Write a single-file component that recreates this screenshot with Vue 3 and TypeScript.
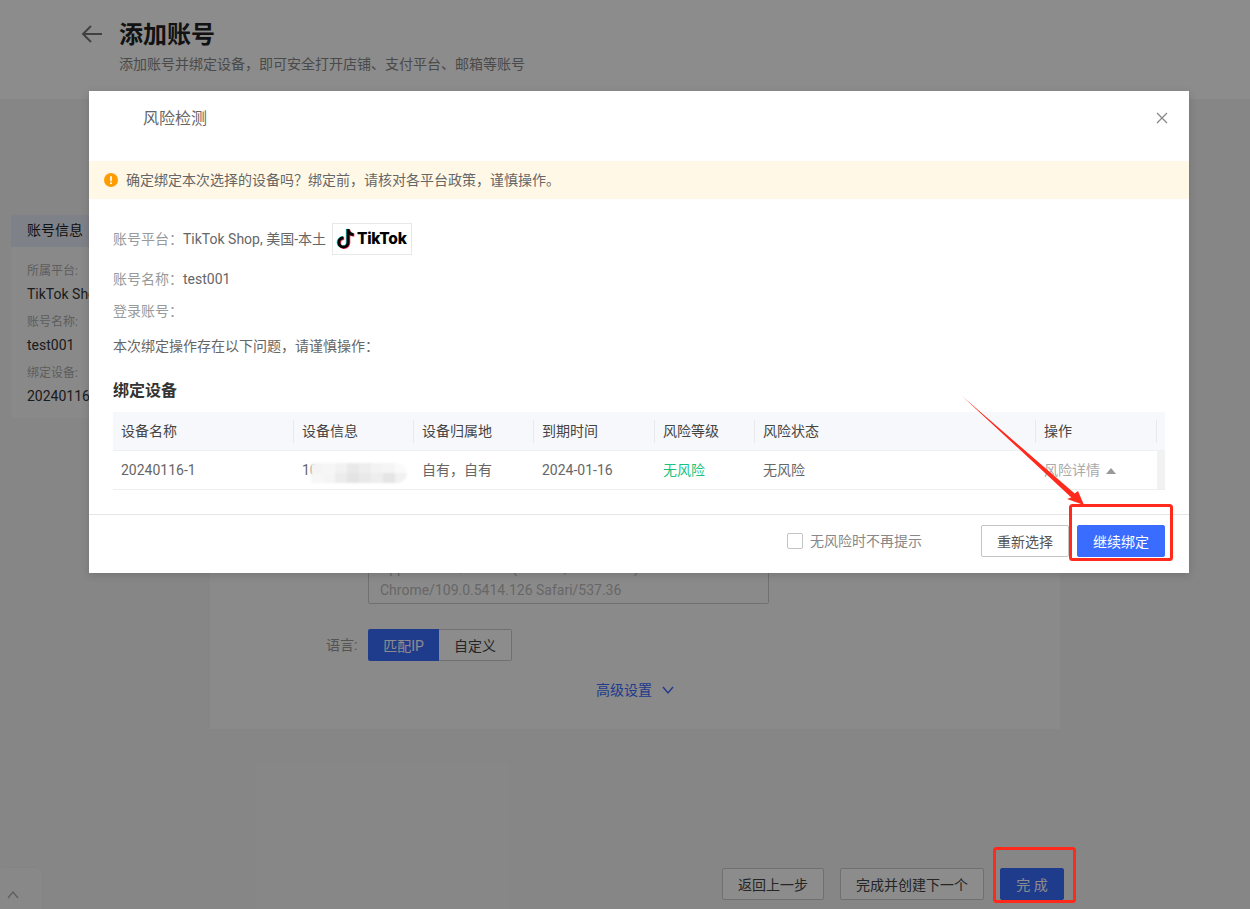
<script setup lang="ts">
const blurCells: string[] = [
  '#f4f4f4','#f6f6f6','#f2f2f2','#e9e9e9','#eeeeee','#f3f3f3','#f5f5f5','#fafafa',
  '#f7f7f7','#f5f5f5','#ececec','#e4e4e4','#e9e9e9','#eeeeee','#e5e5e5','#f1f1f1',
]
const columns = [
  { head: '设备名称', cell: '20240116-1' },
  { head: '设备信息', cell: '10' },
  { head: '设备归属地', cell: '自有\uFF0C自有' },
  { head: '到期时间', cell: '2024-01-16' },
  { head: '风险等级', cell: '无风险' },
  { head: '风险状态', cell: '无风险' },
  { head: '操作', cell: '风险详情' },
]
const notePath = 'M12 1v13.4a4.6 4.6 0 1 1-4.6-4.6M12 1.4c.3 3 2.5 5 5.6 5.2'
</script>

<template>
  <div class="screen">
    <div class="page">
      <header class="head">
        <svg class="back" width="24" height="20" viewBox="0 0 24 20">
          <path d="M22 10H3M11 2l-8 8 8 8" fill="none" stroke="#777" stroke-width="2" />
        </svg>
        <div>
          <h1>添加账号</h1>
          <p>添加账号并绑定设备&#xFF0C;即可安全打开店铺、支付平台、邮箱等账号</p>
        </div>
      </header>

      <main class="main">
        <aside class="side">
          <div class="side-tab">账号信息</div>
          <div class="side-body">
            <label>所属平台:</label>
            <span>TikTok Shop</span>
            <label>账号名称:</label>
            <span>test001</span>
            <label>绑定设备:</label>
            <span>20240116-1</span>
          </div>
        </aside>
        <section class="form-card">
          <div class="ua">Mozilla/5.0 (Windows NT 10.0; Win64; x64)<br />AppleWebKit/537.36 (KHTML, like Gecko)<br />Chrome/109.0.5414.126 Safari/537.36</div>
          <div class="lang">
            <span class="lang-label">语言:</span>
            <button class="seg seg-on">匹配IP</button>
            <button class="seg">自定义</button>
          </div>
          <div class="advanced">
            高级设置
            <svg width="12" height="9" viewBox="0 0 12 9"><path d="M1 1l5 6 5-6" fill="none" stroke="#3a6cff" stroke-width="1.4" /></svg>
          </div>
        </section>
      </main>

      <footer class="actions">
        <button class="btn btn-back">返回上一步</button>
        <button class="btn btn-next">完成并创建下一个</button>
        <button class="btn btn-done">完 成</button>
      </footer>
    </div>

    <div class="corner">
      <svg width="12" height="8" viewBox="0 0 12 8"><path d="M1 7l5-6 5 6" fill="none" stroke="#aaa" stroke-width="1.2" /></svg>
    </div>

    <div class="overlay"></div>

    <div class="modal">
      <div class="modal-head">
        <span class="modal-title">风险检测</span>
        <svg class="close" width="12" height="12" viewBox="0 0 12 12">
          <path d="M1 1l10 10M11 1L1 11" fill="none" stroke="#888" stroke-width="1.3" />
        </svg>
      </div>
      <div class="notice">
        <svg width="14" height="14" viewBox="0 0 14 14">
          <circle cx="7" cy="7" r="7" fill="#ff9c00" />
          <rect x="6.1" y="3" width="1.8" height="5.4" rx=".9" fill="#fff" />
          <circle cx="7" cy="10.3" r="1" fill="#fff" />
        </svg>
        <span class="notice-text">确定绑定本次选择的设备吗&#xFF1F;绑定前&#xFF0C;请核对各平台政策&#xFF0C;谨慎操作。</span>
      </div>
      <div class="modal-body">
        <div class="info info-platform">
          <span class="key">账号平台&#xFF1A;</span><span class="val">TikTok Shop, 美国-本土</span>
          <span class="logo">
            <svg width="20" height="22" viewBox="0 0 20 22">
              <path :d="notePath" transform="translate(-.8 -.2)" fill="none" stroke="#25f4ee" stroke-width="3" />
              <path :d="notePath" transform="translate(.8 .6)" fill="none" stroke="#fe2c55" stroke-width="3" />
              <path :d="notePath" fill="none" stroke="#000" stroke-width="3" />
            </svg>
            <b>TikTok</b>
          </span>
        </div>
        <div class="info info-name"><span class="key">账号名称&#xFF1A;</span><span class="val">test001</span></div>
        <div class="info info-login"><span class="key">登录账号&#xFF1A;</span></div>
        <div class="info info-warn"><span class="val">本次绑定操作存在以下问题&#xFF0C;请谨慎操作&#xFF1A;</span></div>
        <h3>绑定设备</h3>
        <div class="table">
          <div v-for="c in columns" :key="c.head" class="th">{{ c.head }}</div>
          <div class="th th-end"></div>
          <template v-for="(c, i) in columns" :key="'r' + c.head">
            <div class="td" :class="{ safe: i === 4, detail: i === 6, masked: i === 1 }">
              {{ c.cell }}
              <svg v-if="i === 6" class="caret" width="10" height="6" viewBox="0 0 10 6"><path d="M5 0l5 6H0z" fill="#999" /></svg>
              <span v-if="i === 1" class="mosaic">
                <i v-for="(g, n) in blurCells" :key="n" :style="{ background: g }"></i>
              </span>
            </div>
          </template>
          <div class="td td-end"></div>
        </div>
      </div>
      <div class="modal-foot">
        <span class="check"></span>
        <span class="check-text">无风险时不再提示</span>
        <button class="mbtn mbtn-plain">重新选择</button>
        <button class="mbtn mbtn-main">继续绑定</button>
      </div>
    </div>

    <svg class="marks" width="1250" height="909" viewBox="0 0 1250 909">
      <path d="M962 396L1074.7 493.6 1078 491 1084 505 1067 499 1071.3 497.4Z" fill="#ff2a1c" />
      <rect x="1070.5" y="505.5" width="101" height="54" rx="2" fill="none" stroke="#ff2a1c" stroke-width="3" />
      <rect x="994.5" y="848.5" width="80" height="53" rx="2" fill="none" stroke="#ff2a1c" stroke-width="3" />
    </svg>
  </div>
</template>

<style>
html, body { margin: 0; padding: 0; background: #f5f5f5; }
</style>

<style scoped>
.screen {
  position: relative;
  width: 1250px;
  height: 909px;
  overflow: hidden;
  font-family: Roboto, "Noto Sans CJK SC", sans-serif;
  font-size: 14px;
  color: #333;
}
button { font-family: inherit; font-size: 14px; cursor: pointer; }

.page { display: flex; flex-direction: column; height: 909px; background: #f5f5f5; }
.head {
  display: flex;
  box-sizing: border-box;
  height: 99px;
  padding: 18px 0 0 80px;
  background: #fff;
}
.back { margin: 6px 15px 0 0; }
.head h1 { margin: 0; font-size: 24px; line-height: 34px; font-weight: 700; color: #222; }
.head p { margin: 1px 0 0; font-size: 14px; line-height: 22px; color: #888; }

.main { display: flex; align-items: flex-start; height: 630px; }
.side {
  box-sizing: border-box;
  width: 180px;
  height: 203px;
  margin: 116px 0 0 11px;
  background: #fafafa;
  border-radius: 4px;
  overflow: hidden;
}
.side-tab { height: 32px; padding-left: 16px; line-height: 30px; background: #e7ebf7; color: #222; }
.side-body { display: flex; flex-direction: column; padding: 15px 0 0 16px; }
.side-body label { font-size: 12px; line-height: 18px; color: #aaa; }
.side-body span { line-height: 22px; margin: 3px 0 8px; color: #333; }

.form-card {
  display: flex;
  flex-direction: column;
  box-sizing: border-box;
  width: 850px;
  height: 609px;
  margin: 21px 0 0 19px;
  padding-left: 158px;
  justify-content: flex-end;
  background: #fbfbfb;
}
.ua {
  box-sizing: border-box;
  width: 401px;
  padding: 4px 11px 2px;
  border: 1px solid #ccc;
  border-radius: 2px;
  font-size: 14px;
  line-height: 22px;
  white-space: nowrap;
  color: #bbb;
}
.lang { display: flex; margin: 25px 0 0 -42px; }
.lang-label { width: 42px; line-height: 32px; color: #999; }
.seg {
  width: 73px;
  height: 32px;
  margin: 0;
  padding: 0;
  background: #fff;
  border: 1px solid #ccc;
  border-left: 0;
  border-radius: 0 2px 2px 0;
  color: #444;
}
.seg-on { width: 71px; background: #3a6cff; border: 0; border-radius: 2px 0 0 2px; color: #fff; }
.advanced {
  display: flex;
  align-items: center;
  gap: 10px;
  margin: 18px 0 28px 228px;
  line-height: 22px;
  color: #3a6cff;
}

.actions { display: flex; justify-content: flex-end; gap: 16px; height: 180px; align-items: flex-end; padding: 0 186px 9px 0; box-sizing: border-box; }
.btn { height: 32px; padding: 0; background: #fff; border: 1px solid #ccc; border-radius: 2px; color: #444; }
.btn-back { width: 102px; }
.btn-next { width: 144px; }
.btn-done { width: 64px; background: #3a6cff; border-color: #3a6cff; color: #fff; }

.corner {
  position: absolute;
  left: 0;
  bottom: 0;
  width: 42px;
  height: 41px;
  display: flex;
  padding: 23px 0 0 7px;
  box-sizing: border-box;
  background: #f7f8fa;
  border-radius: 0 8px 0 0;
  box-shadow: 0 0 4px rgba(0,0,0,.04);
}
.corner svg { display: block; }

.overlay { position: absolute; inset: 0; background: rgba(0,0,0,.45); }

.modal {
  position: absolute;
  left: 89px;
  top: 91px;
  width: 1100px;
  height: 482px;
  display: flex;
  flex-direction: column;
  background: #fff;
  box-shadow: 0 2px 8px rgba(0,0,0,.15);
}
.modal-head { display: flex; align-items: center; justify-content: space-between; box-sizing: border-box; height: 70px; padding: 0 21px 16px 54px; }
.modal-title { font-size: 16px; line-height: 24px; color: #666; transform: translateY(1px); }
.notice { display: flex; align-items: center; gap: 8px; height: 38px; padding-left: 15px; background: #fff8e6; color: #666; }
.notice-text { padding-bottom: 2px; }
.modal-body { flex: 1; padding: 24px 24px 0; }
.info { display: flex; align-items: center; line-height: 22px; }
.info-platform { height: 32px; }
.info-name { margin-top: 13px; }
.info-login { margin-top: 10px; }
.info-warn { margin-top: 13px; }
.key { color: #999; }
.val { color: #666; }
.logo {
  display: flex;
  align-items: center;
  box-sizing: border-box;
  width: 80px;
  height: 32px;
  margin-left: 6px;
  padding-left: 3px;
  border: 1px solid #e8e8e8;
}
.logo b { margin-left: 1px; font-family: Inter, sans-serif; font-size: 15.5px; font-weight: 800; letter-spacing: -.3px; color: #000; }
h3 { margin: 23px 0 10px; font-size: 16px; line-height: 22px; font-weight: 700; color: #333; }

.table { display: grid; grid-template-columns: 181px 120px 120px 121px 100px 281px 121px 8px; }
.th {
  position: relative;
  box-sizing: border-box;
  height: 39px;
  padding-left: 8px;
  line-height: 38px;
  background: #f7f8fb;
  border-bottom: 1px solid #eff0f3;
  color: #444;
}
.th + .th::before {
  content: "";
  position: absolute;
  left: -1px;
  top: 8px;
  height: 23px;
  width: 1px;
  background: #e8e9ec;
}
.td {
  position: relative;
  box-sizing: border-box;
  height: 39px;
  padding-left: 8px;
  line-height: 38px;
  border-bottom: 1px solid #eee;
  color: #666;
}
.safe { color: #19c37d; }
.detail { color: #aaa; }
.caret { margin-left: 3px; vertical-align: 1px; }
.td-end { padding: 0; background: #f2f2f2; }
.mosaic {
  position: absolute;
  left: 17px;
  top: 12px;
  display: grid;
  grid-template-columns: repeat(8, 12px);
  grid-auto-rows: 10px;
  overflow: hidden;
  border-radius: 0 10px 10px 0;
  filter: blur(1px);
}
.mosaic i { display: block; }

.modal-foot {
  display: flex;
  align-items: flex-start;
  box-sizing: border-box;
  height: 59px;
  padding: 10px 24px 0 0;
  border-top: 1px solid #e5e5e5;
}
.check {
  box-sizing: border-box;
  width: 16px;
  height: 16px;
  margin: 8px 0 0 698px;
  border: 1px solid #c4c4c4;
  border-radius: 2px;
}
.check-text { margin-left: 7px; line-height: 32px; color: #888; }
.mbtn { box-sizing: border-box; width: 88px; height: 32px; padding: 0; border-radius: 2px; }
.mbtn-plain { margin-left: auto; margin-right: 8px; background: #fff; border: 1px solid #c4c4c4; color: #555; }
.mbtn-main { background: #3a6cff; border: 1px solid #3a6cff; color: #fff; }

.marks { position: absolute; left: 0; top: 0; pointer-events: none; }
</style>
